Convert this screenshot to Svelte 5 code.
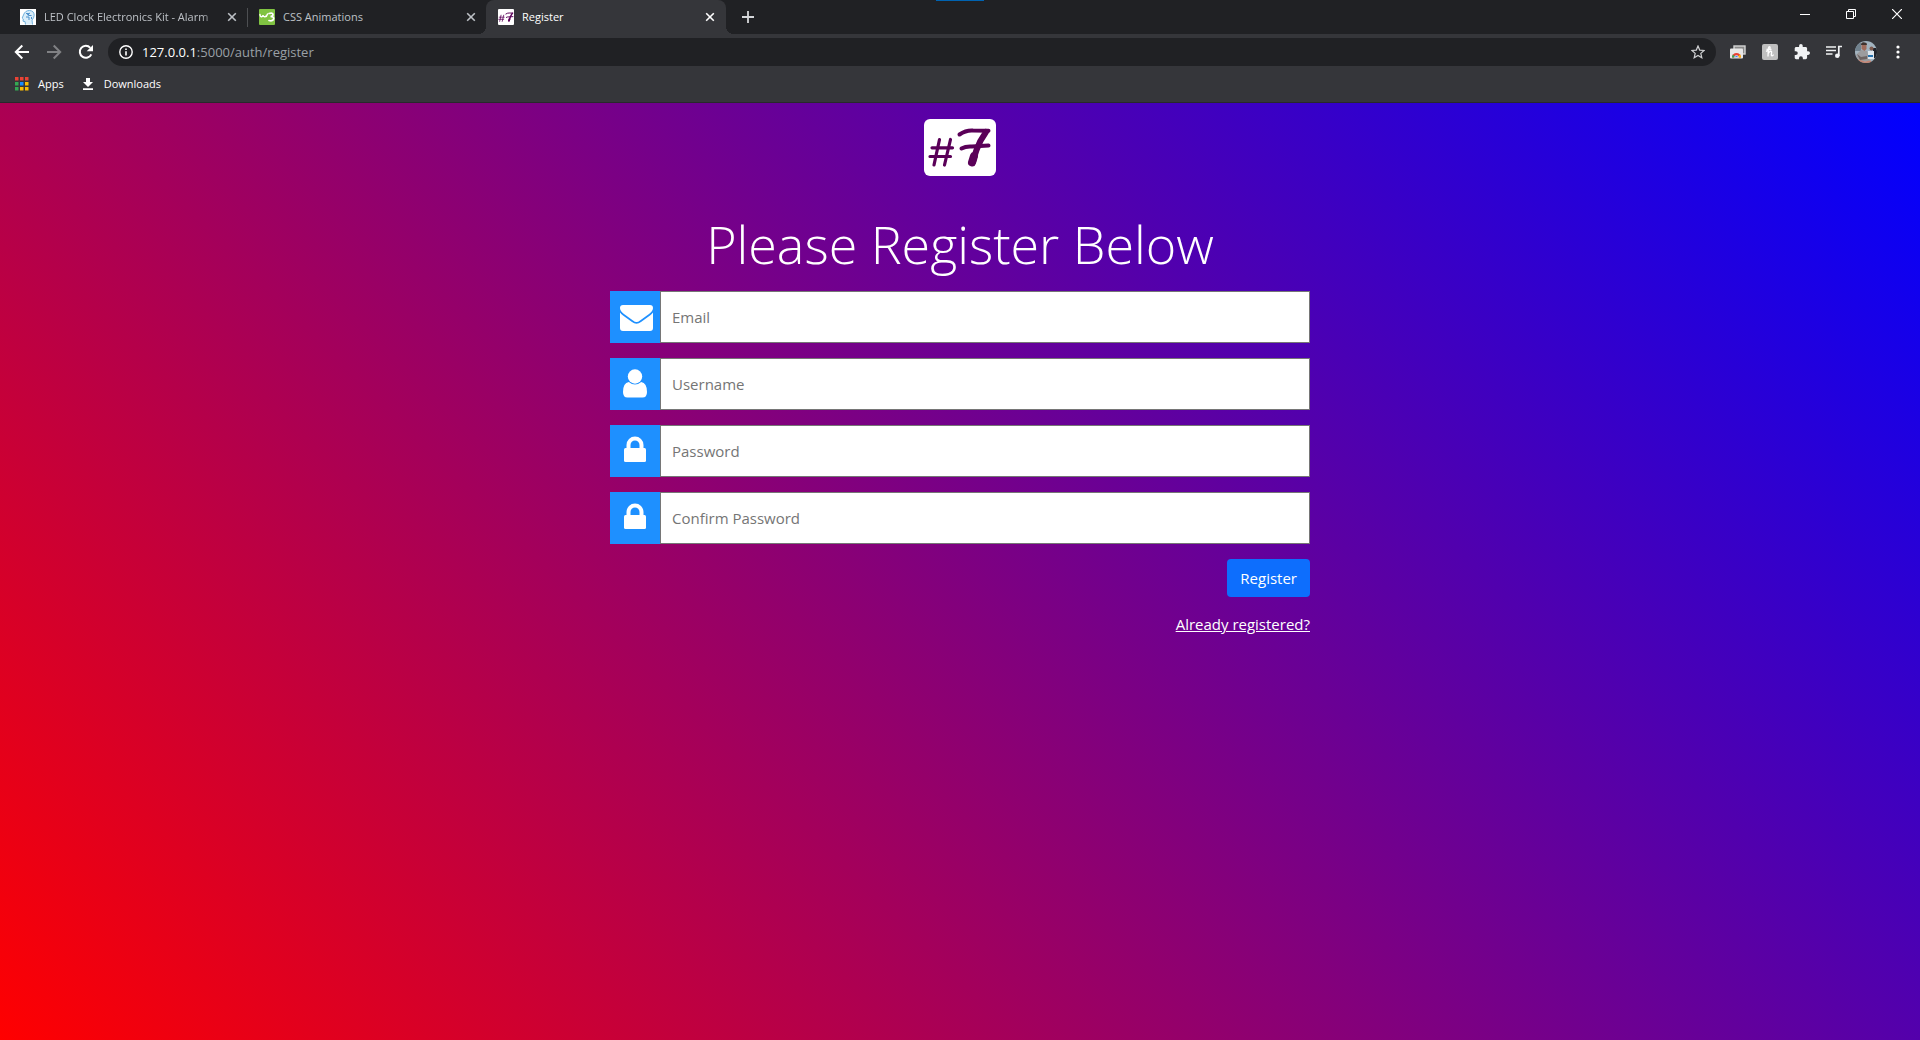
<script>
  const apps = ['#ea4335', '#ea4335', '#ea4335', '#34a853', '#1a8cff', '#fbbc04', '#34a853', '#fbbc04', '#fbbc04'];
  const fields = [
    { id: 'email', label: 'Email', type: 'email', icon: 'envelope' },
    { id: 'username', label: 'Username', type: 'text', icon: 'user' },
    { id: 'password', label: 'Password', type: 'password', icon: 'lock' },
    { id: 'confirm', label: 'Confirm Password', type: 'password', icon: 'lock' }
  ];
</script>

{#snippet close()}
  <svg width="10" height="10" viewBox="0 0 10 10" aria-hidden="true"><path d="M1.2 1.2l7.6 7.6M8.8 1.2L1.2 8.8" stroke="currentColor" stroke-width="1.6" /></svg>
{/snippet}

{#snippet logo(w, h, box)}
  <svg width={w} height={h} viewBox={box} aria-hidden="true">
    <g fill="none" stroke="#5a0058" stroke-linecap="round">
      <path d="M15.500 20.500L10 46M26.500 20.500L20.500 46M8 28.800H28.500M6 37.500H26.500" stroke-width="3.200" />
      <path d="M35.500 15.500Q42 11 49 11.500L64.500 11.800" stroke-width="4" />
      <path d="M37.500 29.500Q42 27 48 27.500L64.500 26.500" stroke-width="4" />
      <path d="M62 13Q55.500 22 52.500 31Q50 38 49 43" stroke-width="6" />
      <path d="M50 37L48 43.500" stroke-width="8" />
    </g>
  </svg>
{/snippet}

<div class="browser">
  <header>
    <div class="tabs">
      <div class="tab first">
        <svg class="fav" width="16" height="16" viewBox="0 0 16 16" aria-hidden="true">
          <rect width="16" height="16" fill="#fff" />
          <path d="M5.500 15.500l-.5-3-2-.3.300-2.200L2.200 9l1.300-3Q5 1.500 9.500 1.500q4.500.3 4.700 4.700Q14 9 12 11l.5 4.500" fill="#d9edf9" stroke="#6fb0dd" stroke-width="1" />
          <path d="M6 4.500h2.500v2h3M6 8h3v3M10 4l-3 2M11.500 8v2" stroke="#3b86c6" fill="none" stroke-width=".9" />
        </svg>
        <span class="tab-title faded">LED Clock Electronics Kit - Alarm</span>
        <button aria-label="Close tab">{@render close()}</button>
      </div>
      <div class="tab second">
        <svg class="fav" width="16" height="16" viewBox="0 0 16 16" aria-hidden="true">
          <rect width="16" height="16" rx="1" fill="#80c342" />
          <path d="M1 5.500q.2 2.500 1.700 2.300Q4 7.500 4 6q.3 2 1.800 1.800Q8 7.500 8.500 5" stroke="#fff" stroke-width="1.400" fill="none" stroke-linecap="round" />
          <path d="M10 4.500q4-1 4 1Q14 7.300 11.500 7.500Q15 7.500 14.700 9.800Q14 12.500 10 11.500" stroke="#fff" stroke-width="1.700" fill="none" stroke-linecap="round" />
        </svg>
        <span class="tab-title">CSS Animations</span>
        <button aria-label="Close tab">{@render close()}</button>
      </div>
      <div class="tab active">
        <span class="fav mark">{@render logo(16, 16, '3 -5 66 66')}</span>
        <span class="tab-title">Register</span>
        <button aria-label="Close tab">{@render close()}</button>
      </div>
      <button class="new" aria-label="New tab"><svg width="12" height="12" viewBox="0 0 12 12"><path d="M6 0v12M0 6h12" stroke="currentColor" stroke-width="1.800" /></svg></button>
      <div class="window">
        <button aria-label="Minimize"><svg width="10" height="10" viewBox="0 0 10 10"><path d="M0 5.500h10" stroke="#fff" /></svg></button>
        <button aria-label="Restore"><svg width="10" height="10" viewBox="0 0 10 10"><path d="M.5 2.500h7v7h-7zM2.500 2.500v-2h7v7h-2" stroke="#fff" fill="none" /></svg></button>
        <button aria-label="Close"><svg width="10" height="10" viewBox="0 0 10 10"><path d="M0 0l10 10M10 0L0 10" stroke="#fff" stroke-width="1.200" /></svg></button>
      </div>
      <span class="marker"></span>
    </div>

    <div class="toolbar">
      <div class="tools">
        <button aria-label="Back"><svg width="16" height="16" viewBox="0 0 16 16"><path d="M15 8H2M8.300 1.500L1.800 8l6.500 6.500" stroke="#fff" stroke-width="2" fill="none" /></svg></button>
        <button aria-label="Forward"><svg width="16" height="16" viewBox="0 0 16 16"><path d="M1 8h13M7.700 1.500L14.200 8l-6.500 6.500" stroke="#808184" stroke-width="2" fill="none" /></svg></button>
        <button aria-label="Reload"><svg width="16" height="16" viewBox="0 0 16 16"><path d="M13.300 10.300A6 6 0 1 1 12.300 3.800" stroke="#fff" stroke-width="2" fill="none" /><path d="M15 1v6.300H8.700z" fill="#fff" /></svg></button>
      </div>
      <div class="omnibox">
        <svg width="14" height="14" viewBox="0 0 14 14" aria-hidden="true"><circle cx="7" cy="7" r="6.200" stroke="#fff" stroke-width="1.400" fill="none" /><path d="M7 6.200v4.300M7 3.500V5" stroke="#fff" stroke-width="1.600" /></svg>
        <span class="url"><b>127.0.0.1</b>:5000/auth/register</span>
        <button aria-label="Bookmark"><svg width="14" height="14" viewBox="0 0 14 14"><path d="M7 1l1.700 4.100 4.400.4-3.300 2.900 1 4.300L7 10.400l-3.800 2.300 1-4.300L.9 5.500l4.400-.4z" fill="none" stroke="#d0d1d3" stroke-width="1.200" /></svg></button>
      </div>
      <div class="tools">
        <button aria-label="Screenshots"><svg width="16" height="14" viewBox="0 0 16 14"><rect x="4" y="1" width="11" height="8" fill="#8a8a8a" stroke="#d5d5d5" stroke-width="1.400" /><rect x="0" y="3.500" width="13" height="10" rx="1" fill="#e8e8e8" /><path d="M2 12.500a4.500 4.500 0 0 1 9 0z" fill="#ea4335" /><path d="M2 12.500Q2 10.500 3 9.500l3 3z" fill="#34a853" /><path d="M11 12.500Q11 10.500 10 9.500l-3 3z" fill="#fbbc04" /><path d="M4.500 12.500a2 2 0 0 1 4 0z" fill="#4285f4" stroke="#fff" stroke-width=".6" /></svg></button>
        <button aria-label="Shopping"><svg width="16" height="16" viewBox="0 0 16 16"><rect width="16" height="16" rx="2" fill="#bfbfbf" /><path d="M4 7.500Q9 5 8 3Q6.500 2 6.300 5.500L6 12.500M6.200 9.500Q8 6.500 9.500 7.500Q9.800 8.500 9.300 11q.5 2 2.300-.3M4.500 5.500h5" stroke="#fff" stroke-width="1.300" fill="none" /></svg></button>
        <button aria-label="Extensions"><svg width="16" height="16" viewBox="1 1 22 22"><path fill="#f1f3f4" d="M20.500 11H19V7c0-1.100-.9-2-2-2h-4V3.500a2.500 2.500 0 0 0-5 0V5H4c-1.100 0-2 .9-2 2v3.800h1.500a2.700 2.700 0 0 1 0 5.400H2V20c0 1.100.9 2 2 2h3.800v-1.500a2.700 2.700 0 0 1 5.400 0V22H17c1.100 0 2-.9 2-2v-4h1.500a2.500 2.500 0 0 0 0-5z" /></svg></button>
        <button aria-label="Media"><svg width="16" height="14" viewBox="0 0 16 14"><path d="M0 2h10M0 5.500h10M0 9h6.500" stroke="#f1f3f4" stroke-width="1.600" /><path d="M12.800 11V1.500H16" stroke="#f1f3f4" stroke-width="1.700" fill="none" /><circle cx="11.300" cy="10.700" r="2.300" fill="#f1f3f4" /></svg></button>
        <button aria-label="Profile"><svg width="22" height="22" viewBox="0 0 22 22"><defs><clipPath id="avatar"><circle cx="11" cy="11" r="11" /></clipPath></defs><g clip-path="url(#avatar)"><rect width="22" height="22" fill="#a3b4c0" /><path d="M0 0h6v10H0z" fill="#71828e" /><path d="M18 7h4v10h-4z" fill="#20232a" /><path d="M1 14l5-5 6 1 3 10H3z" fill="#9c9c9e" /><path d="M2 13l4 3 6-1v3l-7 1z" fill="#6d6463" /><path d="M6.500 3q3-2 5 1v4l-2 2-3-2z" fill="#a06c5c" /><path d="M6 4q0-4 5.500-2l.5 2z" fill="#40332f" /><circle cx="16.500" cy="7.500" r="2" fill="#7d5a4e" /><path d="M13 10h6v8h-6z" fill="#dfe8ef" /><path d="M13 14h5v2h-5z" fill="#2471ad" /><path d="M3 18.500l7 2 6-1v3H3z" fill="#c58370" /></g></svg></button>
        <button aria-label="Menu"><svg width="4" height="14" viewBox="0 0 4 14"><g fill="#fff"><circle cx="2" cy="2" r="1.600" /><circle cx="2" cy="7" r="1.600" /><circle cx="2" cy="12" r="1.600" /></g></svg></button>
      </div>
    </div>

    <nav class="bookmarks">
      <a href="#apps">
        <svg width="16" height="14" viewBox="-1 0 16 14" aria-hidden="true">
          {#each apps as color, i}<rect x={(i % 3) * 5} y={Math.floor(i / 3) * 5} width="3.500" height="3.500" fill={color} />{/each}
        </svg>Apps</a>
      <a href="#downloads">
        <svg width="16" height="12" viewBox="-3 0 16 12" aria-hidden="true"><path d="M3 0h4v4h3L5 9 0 4h3zM0 10.300h10V12H0z" fill="#fff" /></svg>Downloads</a>
    </nav>
  </header>

  <main>
    <div class="brand">{@render logo(72, 57, '0 0 72 57')}</div>
    <h1>Please Register Below</h1>
    <form onsubmit={(e) => e.preventDefault()}>
      {#each fields as f}
        <div class="field">
          <label for={f.id} aria-label={f.label}>
            {#if f.icon === 'envelope'}
              <svg width="36" height="30" viewBox="-3 -2 36 30"><path d="M3 1H30Q33 1 33 4Q33 7 29 10L20 16.500Q16.500 19.500 13 16.500L4 10Q0 7 0 4Q0 1 3 1zM0 8.500Q1 10 3 11.500L12 18Q16.500 21.500 21 18L30 11.500Q32 10 33 8.500V24Q33 27 30 27H3Q0 27 0 24z" fill="#fff" /></svg>
            {:else if f.icon === 'user'}
              <svg width="24" height="29" viewBox="0 0 24 29"><circle cx="12" cy="7.500" r="7.200" fill="#fff" /><path d="M5.800 13Q12 18.200 18.200 13Q24 14 24 23Q24 28.500 19.500 28.500H4.500Q0 28.500 0 23Q0 14 5.800 13z" fill="#fff" /></svg>
            {:else}
              <svg width="22" height="26" viewBox="0 0 22 26"><path d="M4.500 13V9a6.500 6.500 0 0 1 13 0v4" stroke="#fff" stroke-width="4" fill="none" /><rect x="0" y="12" width="22" height="14" rx="1.500" fill="#fff" /></svg>
            {/if}
          </label>
          <input id={f.id} type={f.type} placeholder={f.label} />
        </div>
      {/each}
      <button class="submit">Register</button>
      <a class="login" href="#login">Already registered?</a>
    </form>
  </main>
</div>

<style>
  :global(body) { margin: 0; }
  .browser { min-height: 100vh; display: flex; flex-direction: column; font-family: "Open Sans", "Noto Sans", sans-serif; color: #fff; }
  .browser * { box-sizing: border-box; }
  svg { display: block; flex: none; }
  button { border: 0; padding: 0; background: none; color: inherit; font: inherit; display: flex; align-items: center; justify-content: center; }
  header { background: #35363a; border-bottom: 1px solid #28292c; font-size: 11px; }
  .tabs { position: relative; display: flex; height: 34px; background: #202124; }
  .tab { display: flex; align-items: center; gap: 8px; color: #bdc1c6; width: 240px; padding: 0 11px 0 12px; }
  .first { width: 248px; padding: 0 11px 0 20px; position: relative; }
  .first::after { content: ""; position: absolute; right: 0; top: 8px; height: 19px; width: 1px; background: #4d4f52; }
  .second { width: 238px; padding: 0 10px 0 11px; }
  .fav { width: 16px; flex: none; }
  .mark { background: #fff; border-radius: 1px; }
  .tab-title { flex: 1; min-width: 0; white-space: nowrap; line-height: 16px; }
  .faded { mask-image: linear-gradient(to right, #000 90%, transparent); }
  .active { position: relative; background: #35363a; border-radius: 8px 8px 0 0; color: #fff; }
  .active::before, .active::after { content: ""; position: absolute; bottom: 0; width: 8px; height: 8px; }
  .active::before { left: -8px; background: radial-gradient(circle at 0 0, transparent 8px, #35363a 8px); }
  .active::after { right: -8px; background: radial-gradient(circle at 100% 0, transparent 8px, #35363a 8px); }
  .new { width: 44px; color: #d5d7da; }
  .window { margin-left: auto; display: flex; height: 28px; }
  .window button { width: 46px; }
  .marker { position: absolute; top: 0; left: 50%; width: 48px; height: 1px; margin-left: -24px; background: #0063b1; }
  .toolbar { display: flex; align-items: center; height: 36px; padding: 0 6px; gap: 6px; }
  .tools { display: flex; align-items: center; }
  .tools button { width: 32px; height: 28px; }
  .omnibox { flex: 1; display: flex; align-items: center; gap: 9px; height: 28px; padding: 0 11px; border-radius: 14px; background: #202124; }
  .url { flex: 1; font-size: 13px; color: #9aa0a6; line-height: 18px; }
  .url b { font-weight: 400; color: #fff; }
  .bookmarks { display: flex; align-items: center; gap: 16px; height: 32px; padding: 0 14px 5px; }
  .bookmarks a { display: flex; align-items: center; gap: 8px; color: #fff; text-decoration: none; }
  main { flex: 1; display: flex; flex-direction: column; align-items: center; padding: 16px 16px 32px; background: linear-gradient(45deg, red, blue); }
  .brand { border-radius: 6px; background: #fff; }
  h1 { margin: 34px 0 14px; font-size: 52px; line-height: 67px; font-weight: 300; text-align: center; }
  form { width: 100%; max-width: 700px; display: flex; flex-direction: column; align-items: flex-end; gap: 15px; font-size: 15px; }
  .field { display: flex; width: 100%; height: 52px; }
  label { width: 50px; display: flex; justify-content: center; padding-top: 11px; background: #1e90ff; }
  input { flex: 1; min-width: 0; border: 1px solid #767676; border-radius: 0; padding: 0 11px; font: inherit; background: #fff; color: #212529; outline: 0; }
  input::placeholder { color: #757575; opacity: 1; }
  .submit { height: 38px; padding: 0 13px; border-radius: 4px; background: #0d6efd; }
  .login { color: #fff; line-height: 24px; text-decoration: underline; }
</style>
